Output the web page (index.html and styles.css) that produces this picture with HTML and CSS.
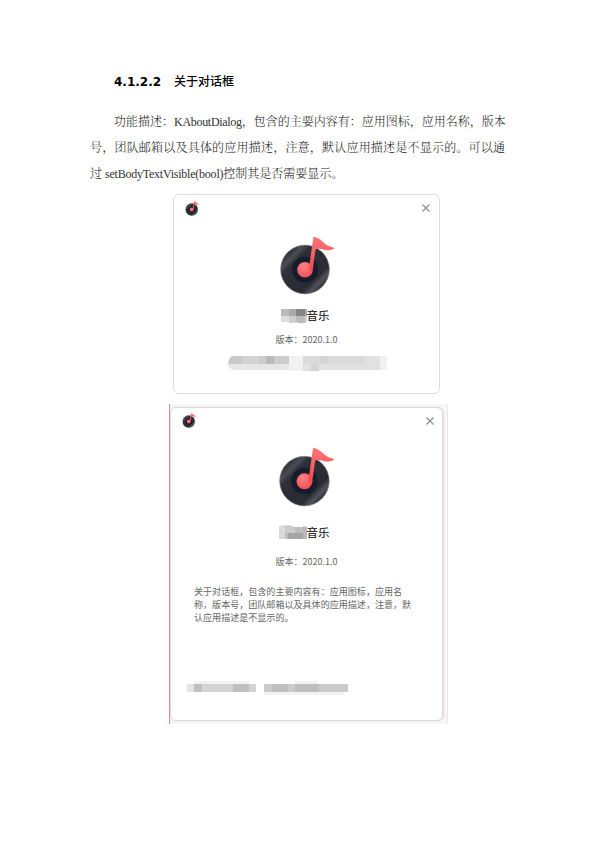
FILE: index.html
```html
<!DOCTYPE html>
<html lang="zh-CN">
<head>
<meta charset="utf-8">
<title>关于对话框</title>
<link rel="stylesheet" href="styles.css">
</head>
<body>
<svg class="defs" width="0" height="0" aria-hidden="true">
  <defs>
    <linearGradient id="disc" x1="0" y1="0" x2="1" y2="1">
      <stop offset="0" stop-color="#25262b"/><stop offset=".17" stop-color="#32343a"/><stop offset=".24" stop-color="#4b4e56"/><stop offset=".32" stop-color="#2d2f36"/><stop offset=".7" stop-color="#292b33"/><stop offset=".78" stop-color="#50535d"/><stop offset=".85" stop-color="#303138"/><stop offset="1" stop-color="#242428"/>
    </linearGradient>
    <linearGradient id="note" x1="0" y1="0" x2="0" y2="1">
      <stop offset="0" stop-color="#fb7678"/><stop offset="1" stop-color="#f7484f"/>
    </linearGradient>
    <radialGradient id="label" cx=".4" cy=".3" r=".75">
      <stop offset="0" stop-color="#ff8283"/><stop offset="1" stop-color="#f44c55"/>
    </radialGradient>
    <symbol id="logo" viewBox="0 0 56 59">
      <circle cx="25" cy="33.5" r="24.4" fill="url(#disc)" stroke="#8b8378" stroke-width=".6"/>
      <circle cx="25" cy="33.5" r="19" fill="none" stroke="#464952" stroke-opacity=".35" stroke-width=".6"/>
      <circle cx="25" cy="33.5" r="13" fill="#161c2c"/>
      <circle cx="25" cy="33.7" r="7.8" fill="url(#label)"/>
      <path d="M34 .8Q33.5.6 33.3 1.6L28.8 33.5Q31 35 32.6 34.5L35.6 13.3C42 10.8 45 17 53.9 12.8Q54.8 11.8 52 11C44 10 42.5 2.5 34 .8Z" fill="url(#note)"/>
    </symbol>
  </defs>
</svg>
<main class="page">
  <h4 class="heading"><span class="number">4.1.2.2</span><span>关于对话框</span></h4>
  <div class="intro">
    <span class="line indent">功能描述：<span class="class-name">KAboutDialog</span>，包含的主要内容有：应用图标，应用名称，版本</span>
    <span class="line">号，团队邮箱以及具体的应用描述，注意，默认应用描述是不显示的。可以通</span>
    <span class="line last">过 <span class="method">setBodyTextVisible(bool)</span>控制其是否需要显示。</span>
  </div>

  <section class="dialog compact">
    <header class="bar">
      <svg class="app-icon"><use href="#logo"/></svg>
      <svg class="close" viewBox="0 0 8 8"><path d="M.5.5l7 7M7.5.5l-7 7"/></svg>
    </header>
    <svg class="logo"><use href="#logo"/></svg>
    <div class="name">
      <svg class="mask" viewBox="0 0 26 16"><path fill="#bbb" d="M0 1h8v7H0z"/><path fill="#a9a9a9" d="M8 1h7v7H8z"/><path fill="#858585" d="M15 1h9v7h-9z"/><path fill="#aaa" d="M24 1h2v7h-2z"/><path fill="#dedede" d="M0 8h8v6H0z"/><path fill="#cdcdcd" d="M8 8h7v7H8z"/><path fill="#bbb" d="M15 8h9v7q-6 1-9-1z"/><path fill="#d4d4d4" d="M24 8h2v6l-2 1z"/></svg><b>音乐</b>
    </div>
    <div class="version">版本：2020.1.0</div>
    <svg class="mail" viewBox="0 0 160 15"><path fill="#c9c9c9" d="M4 0h10v8H0Q1 1 4 0z"/><path fill="#d3d3d3" d="M14 0h16v8H14z"/><path fill="#ccc" d="M30 0h8v8h-8zM46 0h15v8H46z"/><path fill="#bababa" d="M38 0h8v8h-8z"/><path fill="#e6e6e6" d="M0 8h61v6L6 14Q1 13 0 8z"/><path fill="#f1f1f1" d="M61 0h8v15h-8zM69 0h6v15h-6z"/><path fill="#dadada" d="M75 0h17v8H75zM100 0h37v8h-37z"/><path fill="#d4d4d4" d="M92 0h8v8h-8zM83 8h8v7h-8z"/><path fill="#e1e1e1" d="M137 0h15v8h-15zM75 8h8v7h-8zM91 8h61v6H91z"/><path fill="#f1f1f1" d="M152 0h7v14h-7z"/></svg>
  </section>

  <div class="capture">
    <section class="dialog full">
      <header class="bar">
        <svg class="app-icon"><use href="#logo"/></svg>
        <svg class="close" viewBox="0 0 8 8"><path d="M.5.5l7 7M7.5.5l-7 7"/></svg>
      </header>
      <svg class="logo"><use href="#logo"/></svg>
      <div class="name">
        <svg class="mask" viewBox="0 0 28 16"><path fill="#dadada" d="M0 1l6-1v14H0z"/><path fill="#cbcbcb" d="M6 1l3-1 7 2v6H6z"/><path fill="#bdbdbd" d="M6 8h3v6H6zM16 2h8v6h-8z"/><path fill="#a4a4a4" d="M9 8h15v6H9z"/><path fill="#b8b8b8" d="M24 1l4 1v12h-4z"/></svg><b>音乐</b>
      </div>
      <div class="version">版本：2020.1.0</div>
      <p class="description">关于对话框，包含的主要内容有：应用图标，应用名<br>称，版本号，团队邮箱以及具体的应用描述，注意，默<br>认应用描述是不显示的。</p>
      <svg class="mail" viewBox="0 0 162 14"><path fill="#f2f2f2" d="M7 0h55v3H7zM77 11h80v3H77zM108 0h22v3h-22z"/><path fill="#e3e3e3" d="M0 3h7v8H0z"/><path fill="#bfbfbf" d="M7 3h8v8H7zM46 3h16v8H46z"/><path fill="#d3d3d3" d="M15 3h31v8H15zM62 3h7v8h-7z"/><path fill="#cbcbcb" d="M77 3h8v8h-8zM101 3h7v8h-7zM132 3h29v8h-29z"/><path fill="#bfbfbf" d="M85 3h16v8H85zM108 3h24v8h-24z"/></svg>
    </section>
  </div>
</main>
</body>
</html>
```
FILE: styles.css
```css
* { box-sizing: border-box; }
body { margin: 0; background: #fff; }
svg { display: block; flex: none; }
.defs { position: absolute; }
.page {
  width: 596px;
  height: 842px;
  padding-top: 71px;
  overflow: hidden;
  font-family: "Noto Sans CJK SC", sans-serif;
}
.heading {
  display: flex;
  gap: 13px;
  margin: 0 0 17px 114px;
  height: 20px;
  font: bold 12px/22px "DejaVu Sans", "Noto Sans CJK SC", sans-serif;
  color: #000;
}
.heading span:last-child { font-weight: 500; }
.intro {
  width: 415px;
  margin-left: 90px;
  font: 300 12px/28px "Liberation Serif", "Noto Serif CJK SC", "Noto Sans CJK SC", serif;
  color: #222;
}
.line {
  display: block;
  height: 26px;
  white-space: nowrap;
  text-align: justify;
  text-align-last: justify;
}
.indent { padding-left: 24px; }
.last { width: 252px; }
.class-name { letter-spacing: -.3px; color: #333; }
.method { letter-spacing: -.23px; color: #333; }
.dialog {
  display: flex;
  flex-direction: column;
  align-items: center;
  background: #fff;
  border: 1px solid #dcdcdc;
  border-radius: 6px;
}
.compact {
  width: 267px;
  height: 200px;
  margin: 8px 0 0 173px;
}
.bar {
  display: flex;
  justify-content: space-between;
  align-items: flex-start;
  width: 100%;
  height: 42px;
  padding: 6px 9px 0 11px;
}
.app-icon { width: 15px; height: 15px; }
.close {
  width: 8px;
  height: 8px;
  margin-top: 3px;
  fill: none;
  stroke: #888;
  stroke-width: 1.1;
}
.logo { width: 56px; height: 59px; }
.name {
  display: flex;
  align-items: center;
  height: 18px;
  font-size: 11.5px;
  line-height: 16px;
  color: #333;
}
.name b { height: 18px; font-weight: 500; }
.mask { width: 26px; height: 16px; }
.version {
  height: 14px;
  font-size: 9px;
  line-height: 14px;
  color: #666;
  white-space: nowrap;
}
.compact .logo { margin: -1px 0 0 3px; }
.compact .name { margin: 12px 0 0 -3px; }
.compact .version { margin: 8px 0 0 0; }
.compact .mail { width: 160px; height: 15px; margin: 9px 0 0 3px; }
.capture {
  width: 279px;
  height: 320px;
  margin: 10px 0 0 169px;
  padding: 3px 0 0 0;
  background: #f7f7f7;
  border-left: 1px solid #d98b93;
  border-right: 1px solid #f5dfe2;
}
.full {
  width: 273px;
  height: 314px;
  box-shadow: 1px 0 2px #ddd;
}
.full .bar { height: 40px; padding: 5px 8px 0 11px; }
.full .close { margin-top: 4px; }
.full .logo { width: 57px; height: 60px; margin: -1px 0 0 2px; }
.full .name { margin: 17px 0 0 -5px; }
.full .mask { width: 28px; }
.full .version { margin-top: 13px; }
.description {
  align-self: flex-start;
  margin: 16px 0 0 23px;
  font-size: 9.06px;
  line-height: 13px;
  color: #666;
  white-space: nowrap;
}
.full .mail {
  align-self: flex-start;
  width: 162px;
  height: 14px;
  margin: 57px 0 0 16px;
}
```
